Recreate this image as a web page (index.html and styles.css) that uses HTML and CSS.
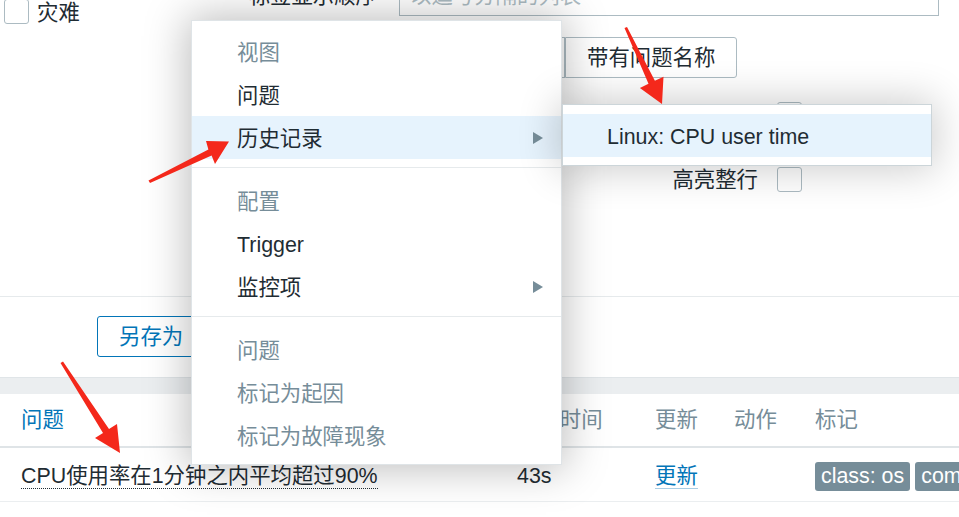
FILE: index.html
```html
<!DOCTYPE html>
<html lang="zh-CN">
<head>
<meta charset="utf-8">
<title>问题</title>
<link rel="stylesheet" href="styles.css">
</head>
<body>
<div class="page">
  <div class="filter">
    <div class="filter-left">
      <div class="check-row"><span class="checkbox"></span><span class="ctext">灾难</span></div>
    </div>
    <div class="filter-right">
      <div class="form-row row-tags">
        <label class="flabel">标签显示顺序</label>
        <div class="input">以逗号分隔的列表</div>
      </div>
      <div class="form-row row-show">
        <label class="flabel">问题显示</label>
        <div class="btn-group">
          <span class="seg seg-narrow">全部</span>
          <span class="seg seg-narrow">分开</span>
          <span class="seg">带有问题名称</span>
        </div>
      </div>
      <div class="opts">
        <div class="opt-row"><span class="olabel olabel-low">紧凑视图</span><span class="checkbox"></span></div>
        <div class="opt-row"><span class="olabel">高亮整行</span><span class="checkbox"></span></div>
      </div>
    </div>
  </div>
  <div class="actions">
    <span class="btn-outline">另存为</span>
    <span class="btn-primary">应用</span>
    <span class="btn-outline">重设</span>
  </div>
  <div class="band"></div>
  <div class="trow thead">
    <div class="c1 link">问题</div>
    <div class="c2">持续时间</div>
    <div class="c3">更新</div>
    <div class="c4">动作</div>
    <div class="c5">标记</div>
  </div>
  <div class="trow tbody">
    <div class="c1"><span class="dotted">CPU使用率在1分钟之内平均超过90%</span></div>
    <div class="c2">43s</div>
    <div class="c3"><span class="ulink">更新</span></div>
    <div class="c4"></div>
    <div class="c5 tags"><span class="tag">class: os</span><span class="tag">component: cpu</span></div>
  </div>
</div>

<div class="ctx-menu">
  <div class="mi head">视图</div>
  <div class="mi">问题</div>
  <div class="mi hl"><span>历史记录</span><span class="tri"></span></div>
  <div class="sep"></div>
  <div class="mi head">配置</div>
  <div class="mi">Trigger</div>
  <div class="mi"><span>监控项</span><span class="tri"></span></div>
  <div class="sep"></div>
  <div class="mi head">问题</div>
  <div class="mi dis">标记为起因</div>
  <div class="mi dis">标记为故障现象</div>
</div>

<div class="submenu">
  <div class="mi hl sub">Linux: CPU user time</div>
</div>

<svg class="arrows" width="959" height="517" viewBox="0 0 959 517">
  <polygon points="148.5,180.5 208.4,149.4 206,141 229,141.5 215,164 211.6,155.6 150,183" />
  <polygon points="624.5,28 648.5,83.8 639.9,87.9 662,104 663.5,76.7 654.9,80.8 627,27" />
  <polygon points="60.5,363 103,432.9 95,438 120,453 117,424 109,429.1 63,361.5" />
</svg>
</body>
</html>
```
FILE: styles.css
```css
html, body {
  margin: 0;
  padding: 0;
  overflow: hidden;
}
body {
  width: 959px;
  height: 517px;
  position: relative;
  background: #ffffff;
  color: #1f2c33;
  font-family: "Liberation Sans", "Noto Sans CJK SC", sans-serif;
  font-size: 21.4px;
  line-height: 1.15;
}
.page {
  width: 959px;
}
.filter {
  display: flex;
  margin-top: -24px;
  height: 321px;
  box-sizing: border-box;
  border-bottom: 1px solid #e6eaec;
}
.filter-left {
  width: 220px;
  flex: none;
  box-sizing: border-box;
  padding: 23px 0 0 4px;
}
.check-row {
  display: flex;
  align-items: center;
  gap: 8px;
  height: 25px;
}
.ctext {
  padding-top: 3px;
}
.checkbox {
  width: 25px;
  height: 25px;
  box-sizing: border-box;
  border: 1px solid #acbbc2;
  border-radius: 3px;
  background: #fff;
  flex: none;
}
.filter-right {
  flex: 1;
  display: flex;
  flex-direction: column;
}
.form-row {
  display: flex;
  align-items: center;
}
.flabel {
  width: 179px;
  box-sizing: border-box;
  padding-right: 22px;
  text-align: right;
  flex: none;
}
.row-tags {
  height: 40px;
}
.input {
  width: 540px;
  height: 40px;
  box-sizing: border-box;
  border: 1px solid #acbbc2;
  padding: 0 10px;
  display: flex;
  align-items: center;
  color: #acbbc2;
}
.row-show {
  margin-top: 21px;
  height: 41px;
}
.btn-group {
  display: flex;
}
.seg {
  height: 41px;
  box-sizing: border-box;
  border: 1px solid #acbbc2;
  padding: 2px 21px 0;
  display: flex;
  align-items: center;
  justify-content: center;
  background: #fff;
}
.seg:first-child {
  border-radius: 3px 0 0 3px;
}
.seg:last-child {
  border-radius: 0 3px 3px 0;
}
.seg-narrow {
  width: 83px;
  padding: 0;
}
.opts {
  margin-left: 418px;
  margin-top: 24px;
  display: flex;
  flex-direction: column;
  gap: 40px;
}
.opt-row {
  display: flex;
  align-items: center;
  gap: 19px;
  height: 25px;
}
.olabel {
  width: 120px;
  text-align: right;
  padding-top: 1px;
}
.olabel-low {
  padding-top: 12px;
}
.actions {
  display: flex;
  gap: 10px;
  padding: 19px 0 20px 97px;
}
.btn-outline, .btn-primary {
  height: 41px;
  box-sizing: border-box;
  padding: 2px 21px 0;
  border: 1px solid #0275b8;
  border-radius: 3px;
  display: flex;
  align-items: center;
  color: #0275b8;
  background: #fff;
}
.btn-primary {
  background: #0275b8;
  color: #fff;
}
.band {
  height: 17px;
  background: #ebeef0;
  box-sizing: border-box;
  border-top: 1px solid #e0e5e8;
}
.trow {
  display: grid;
  grid-template-columns: 517px 138px 79px 81px 1fr;
  align-items: center;
  white-space: nowrap;
}
.c1 {
  padding-left: 21px;
}
.thead {
  height: 54px;
  box-sizing: border-box;
  border-bottom: 2px solid #dfe4e7;
  color: #768d99;
}
.thead .link {
  color: #0275b8;
}
.tbody {
  height: 54px;
  box-sizing: border-box;
  padding-top: 3px;
  border-bottom: 1px solid #ebeef0;
}
.dotted {
  border-bottom: 1px dotted #1f2c33;
}
.ulink {
  color: #0275b8;
  border-bottom: 1px solid #a9cde4;
}
.tags {
  display: flex;
  gap: 5px;
  overflow: visible;
}
.tag {
  height: 29px;
  display: inline-flex;
  align-items: center;
  padding: 0 6px;
  border-radius: 3px;
  background: #768d99;
  color: #fff;
  flex: none;
}
.ctx-menu {
  position: absolute;
  left: 191px;
  top: 20px;
  width: 371px;
  box-sizing: border-box;
  padding: 9px 0 7px;
  background: #fff;
  border: 1px solid #dfe4e7;
  box-shadow: 0 0 40px 4px rgba(0, 0, 0, 0.26);
  z-index: 5;
}
.mi {
  height: 43px;
  box-sizing: border-box;
  display: flex;
  align-items: center;
  justify-content: space-between;
  padding: 3px 18px 0 45px;
  white-space: nowrap;
}
.mi.head, .mi.dis {
  color: #768d99;
}
.mi.hl {
  background: #e6f3fd;
}
.tri {
  width: 0;
  height: 0;
  margin-top: -3px;
  border-left: 10px solid #768d99;
  border-top: 6.5px solid transparent;
  border-bottom: 6.5px solid transparent;
}
.sep {
  height: 20px;
  box-sizing: border-box;
  padding-top: 8px;
}
.sep::before {
  content: "";
  display: block;
  height: 1px;
  background: #e6eaec;
}
.submenu {
  position: absolute;
  left: 562px;
  top: 104px;
  width: 370px;
  box-sizing: border-box;
  padding: 9px 0 8px;
  background: #fff;
  border: 1px solid #ccd5d9;
  box-shadow: 0 0 40px 4px rgba(0, 0, 0, 0.2);
  z-index: 6;
}
.mi.sub {
  padding-left: 44px;
}
.arrows {
  position: absolute;
  left: 0;
  top: 0;
  z-index: 10;
  pointer-events: none;
}
.arrows polygon {
  fill: #f4281b;
}
```
